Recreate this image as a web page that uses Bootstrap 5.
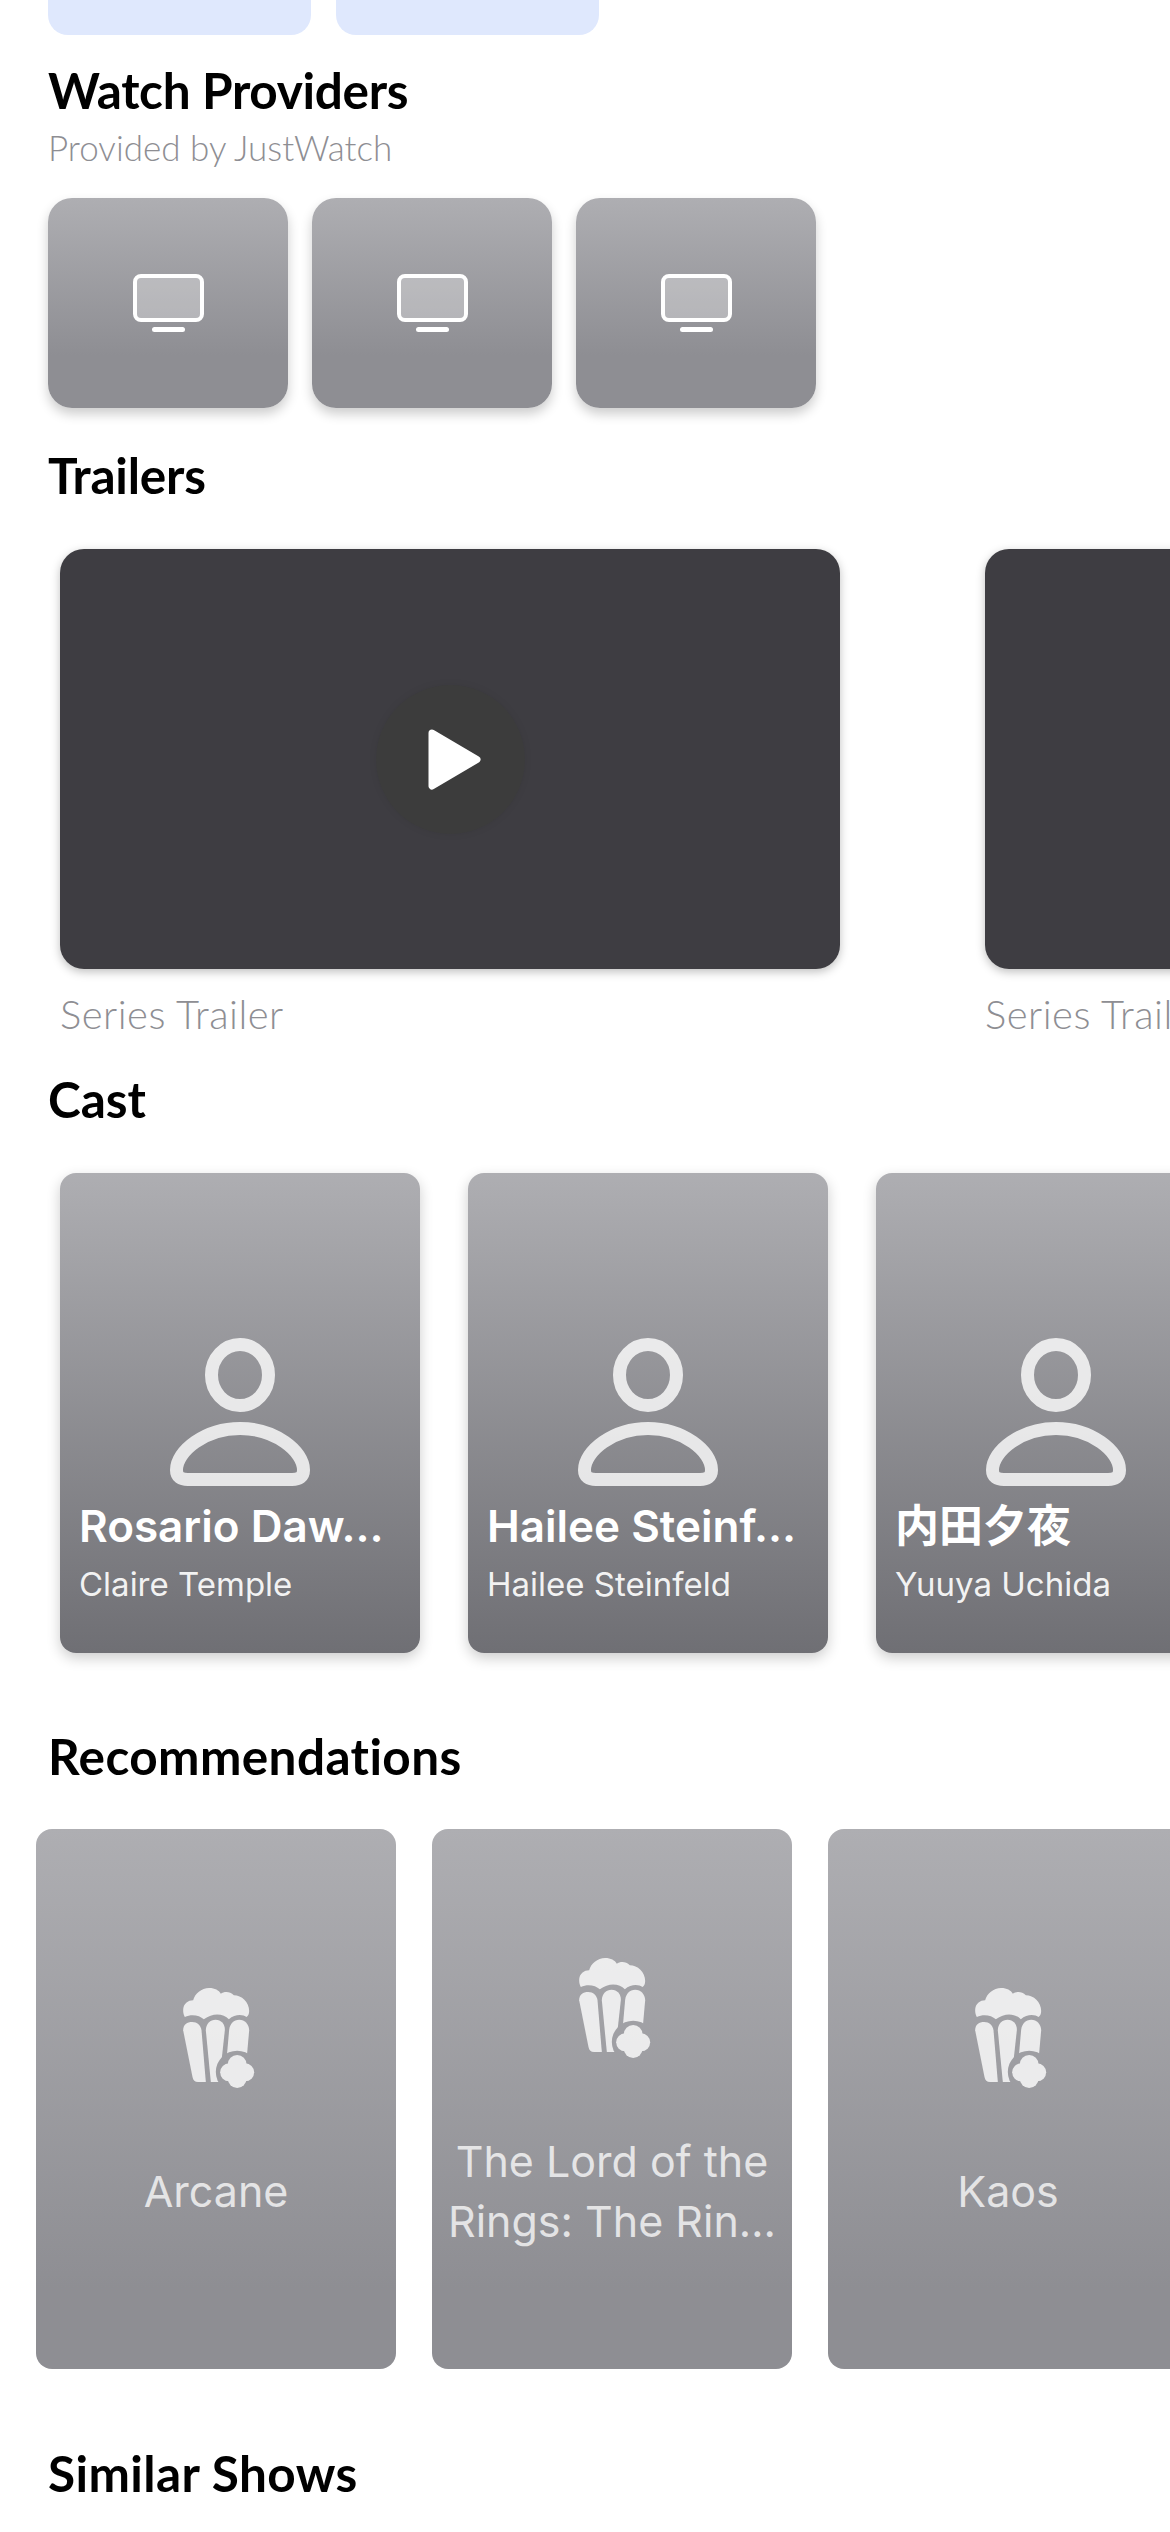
<!DOCTYPE html>
<html lang="en">
<head>
    <meta charset="UTF-8">
    <meta name="viewport" content="width=device-width, initial-scale=1.0">
    <title>Show details</title>
    <link href="https://cdn.jsdelivr.net/npm/bootstrap@5.3.0/dist/css/bootstrap.min.css" rel="stylesheet">
    <style>
        body { height: 2532px; overflow: hidden; background: #fff; font-family: Inter, "Noto Sans CJK JP", sans-serif; }
        .top-row { gap: 25px; padding-left: 48px; }
        .top-tile { width: 263px; height: 35px; background: #dfe8fd; border-radius: 0 0 20px 20px; }
        .sec-title { font-family: Lato, sans-serif; font-weight: 700; font-size: 49.5px; line-height: 60px; color: #000; margin: 0; padding-left: 48px; }
        .head-watch { margin-top: 25px; letter-spacing: -.3px; }
        .head-trailers { margin-top: 37px; letter-spacing: -.2px; }
        .head-cast { margin-top: 22px; }
        .head-rec { margin-top: 53px; letter-spacing: .4px; }
        .head-similar { margin-top: 74px; letter-spacing: .4px; }
        .sec-sub { font-family: Lato, sans-serif; font-weight: 300; font-size: 35px; line-height: 44px; color: #8e8e93; padding-left: 48px; margin-top: 5px; }
        .provider-row { gap: 24px; padding: 0 48px; margin-top: 29px; }
        .provider-tile { width: 240px; height: 210px; border-radius: 24px; background: linear-gradient(#aeaeb2, #8e8e93 75%); box-shadow: 0 6px 12px rgba(0,0,0,.2); }
        .trailer-row { gap: 145px; padding: 44px 0 10px 60px; }
        .trailer-item { flex: 0 0 780px; }
        .trailer-box { height: 420px; border-radius: 24px; background: #3e3d42; box-shadow: 0 3px 10px rgba(0,0,0,.25); }
        .play-disc { width: 149px; height: 149px; border-radius: 50%; background: #3c3c3c; box-shadow: 0 0 8px rgba(0,0,0,.06); }
        .play-svg { margin-left: 9px; }
        .trailer-cap { font-family: Lato, sans-serif; font-weight: 300; font-size: 40px; letter-spacing: .5px; line-height: 46px; color: #8e8e93; white-space: nowrap; margin-top: 22px; }
        .cast-row { gap: 48px; padding: 44px 0 20px 60px; }
        .cast-tile { flex: 0 0 360px; height: 480px; border-radius: 16px; background: linear-gradient(#aeaeb2, #6f6f74); box-shadow: 0 5px 14px rgba(0,0,0,.2); padding: 165px 19px 0; }
        .person-svg { opacity: .8; }
        .cast-name { font-weight: 600; font-size: 44px; line-height: 56px; color: #fff; white-space: nowrap; margin-top: 12px; }
        .cast-role { font-size: 33px; line-height: 42px; color: rgba(255,255,255,.92); white-space: nowrap; margin-top: 9px; }
        .rec-row { gap: 36px; padding: 43px 0 0 36px; }
        .rec-tile { flex: 0 0 360px; height: 540px; border-radius: 16px; background: linear-gradient(#aeaeb2, #8e8e93 85%); padding: 10px 10px 0; }
        .popcorn-svg { fill: #fff; opacity: .8; transform: translateX(3px); }
        .rec-name { font-size: 43px; line-height: 60px; color: rgba(255,255,255,.75); text-align: center; margin-top: 73px; }
    </style>
</head>
<body>
    <svg width="0" height="0" class="d-block">
        <defs>
            <mask id="popcornCut" maskUnits="userSpaceOnUse" x="90" y="100" width="240" height="320">
                <rect x="90" y="100" width="240" height="320" fill="#fff"/>
                <circle cx="262" cy="365" r="64" fill="#000"/>
            </mask>
            <symbol id="popcorn" viewBox="100 113 215 300">
                <path d="M100 180C100 160 115 150 130 150C135 130 155 113 178 113C195 113 207 120 213 130C222 124 240 122 252 135C275 135 298 155 298 182C298 190 295 197 290 200C280 192 255 190 237 207C222 190 190 185 162 207C150 195 125 190 105 200C102 195 100 188 100 180Z"/>
                <g mask="url(#popcornCut)">
                    <path d="M100 240C100 222 112 215 127 215C142 215 153 225 155 240L168 395H145C135 395 130 390 128 380Z"/>
                    <path d="M168 240C168 220 182 208 197 208C215 208 226 222 225 240L208 395H183Z"/>
                    <path d="M238 238C240 220 252 208 268 208C285 208 298 222 298 240L290 330H230Z"/>
                </g>
                <circle cx="262" cy="342" r="28"/><circle cx="238" cy="366" r="27"/><circle cx="286" cy="366" r="27"/><circle cx="262" cy="385" r="28"/><circle cx="262" cy="365" r="30"/>
            </symbol>
            <symbol id="person" viewBox="0 0 140 148">
                <ellipse cx="70" cy="37" rx="28.5" ry="30.5" fill="none" stroke="#fff" stroke-width="13"/>
                <path d="M70 90.5C35 90.5 6.5 113 6.5 132C6.5 139 11 141.5 18 141.5H122C129 141.5 133.5 139 133.5 132C133.5 113 105 90.5 70 90.5Z" fill="none" stroke="#fff" stroke-width="13"/>
            </symbol>
            <symbol id="monitor" viewBox="0 0 71 58">
                <rect x="2" y="2" width="67" height="44" rx="6" fill="#fff" fill-opacity=".3" stroke="#fff" stroke-width="4"/>
                <rect x="19" y="53" width="33" height="5" rx="2.5" fill="#fff"/>
            </symbol>
        </defs>
    </svg>

    <div class="d-flex top-row">
        <div class="top-tile"></div>
        <div class="top-tile"></div>
    </div>

    <h2 class="sec-title head-watch">Watch Providers</h2>
    <div class="sec-sub">Provided by JustWatch</div>
    <div class="d-flex provider-row">
        <div class="provider-tile d-flex align-items-center justify-content-center"><svg width="71" height="58"><use href="#monitor"/></svg></div>
        <div class="provider-tile d-flex align-items-center justify-content-center"><svg width="71" height="58"><use href="#monitor"/></svg></div>
        <div class="provider-tile d-flex align-items-center justify-content-center"><svg width="71" height="58"><use href="#monitor"/></svg></div>
    </div>

    <h2 class="sec-title head-trailers">Trailers</h2>
    <div class="d-flex overflow-hidden trailer-row">
        <div class="trailer-item">
            <div class="trailer-box d-flex align-items-center justify-content-center">
                <div class="play-disc d-flex align-items-center justify-content-center">
                    <svg class="play-svg" width="53" height="61" viewBox="0 0 53 61"><path d="M4 4L49 30.5L4 57Z" fill="#fff" stroke="#fff" stroke-width="7" stroke-linejoin="round"/></svg>
                </div>
            </div>
            <div class="trailer-cap">Series Trailer</div>
        </div>
        <div class="trailer-item">
            <div class="trailer-box"></div>
            <div class="trailer-cap">Series Trailer</div>
        </div>
    </div>

    <h2 class="sec-title head-cast">Cast</h2>
    <div class="d-flex overflow-hidden cast-row">
        <div class="cast-tile">
            <svg class="d-block mx-auto person-svg" width="140" height="148"><use href="#person"/></svg>
            <div class="cast-name">Rosario Daw…</div>
            <div class="cast-role">Claire Temple</div>
        </div>
        <div class="cast-tile">
            <svg class="d-block mx-auto person-svg" width="140" height="148"><use href="#person"/></svg>
            <div class="cast-name">Hailee Steinf…</div>
            <div class="cast-role">Hailee Steinfeld</div>
        </div>
        <div class="cast-tile">
            <svg class="d-block mx-auto person-svg" width="140" height="148"><use href="#person"/></svg>
            <div class="cast-name" lang="ja">内田夕夜</div>
            <div class="cast-role">Yuuya Uchida</div>
        </div>
    </div>

    <h2 class="sec-title head-rec">Recommendations</h2>
    <div class="d-flex overflow-hidden rec-row">
        <div class="rec-tile d-flex flex-column justify-content-center">
            <svg class="d-block mx-auto popcorn-svg" width="72" height="100"><use href="#popcorn"/></svg>
            <div class="rec-name">Arcane</div>
        </div>
        <div class="rec-tile d-flex flex-column justify-content-center">
            <svg class="d-block mx-auto popcorn-svg" width="72" height="100"><use href="#popcorn"/></svg>
            <div class="rec-name">The Lord of the Rings: The Rin…</div>
        </div>
        <div class="rec-tile d-flex flex-column justify-content-center">
            <svg class="d-block mx-auto popcorn-svg" width="72" height="100"><use href="#popcorn"/></svg>
            <div class="rec-name">Kaos</div>
        </div>
    </div>

    <h2 class="sec-title head-similar">Similar Shows</h2>

    <script src="https://cdn.jsdelivr.net/npm/bootstrap@5.3.0/dist/js/bootstrap.bundle.min.js"></script>
</body>
</html>
